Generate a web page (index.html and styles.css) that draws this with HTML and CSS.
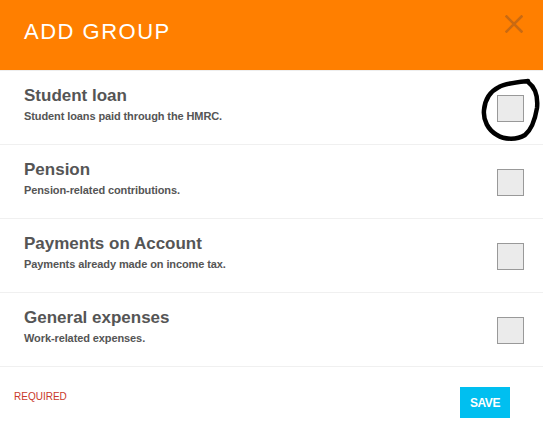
FILE: index.html
```html
<!DOCTYPE html>
<html>
  <head>
    <link rel="stylesheet" href="styles.css">
  </head>
  <body>
    <div class="modal">
      <div class="modal-header">
        <p class="modal-title">ADD GROUP</p>
        <button class="close-btn" aria-label="Close">
          <svg width="18" height="18" viewBox="0 0 18 18">
            <path d="M1.5 1.5 L16.5 16.5 M16.5 1.5 L1.5 16.5" stroke="#c96a12" stroke-width="2.6" stroke-linecap="square" fill="none"/>
          </svg>
        </button>
      </div>
      <div class="group-list">
        <label class="group-row">
          <div class="group-text">
            <p class="group-name">Student loan</p>
            <p class="group-desc">Student loans paid through the HMRC.</p>
          </div>
          <span class="check-wrap">
            <input type="checkbox" class="group-check">
            <svg class="scribble" width="62" height="64" viewBox="0 0 62 64">
              <path d="M48 3 C38 4 26 5 19 9 C11 13 5 21 4 32 C3 42 8 52 17 57 C25 62 37 62 45 57 C51 52 55 42 57 30 C58 20 56 10 48 4" stroke="#000" stroke-width="4.5" stroke-linecap="round" fill="none"/>
            </svg>
          </span>
        </label>
        <label class="group-row">
          <div class="group-text">
            <p class="group-name">Pension</p>
            <p class="group-desc">Pension-related contributions.</p>
          </div>
          <span class="check-wrap">
            <input type="checkbox" class="group-check">
          </span>
        </label>
        <label class="group-row">
          <div class="group-text">
            <p class="group-name">Payments on Account</p>
            <p class="group-desc">Payments already made on income tax.</p>
          </div>
          <span class="check-wrap">
            <input type="checkbox" class="group-check">
          </span>
        </label>
        <label class="group-row">
          <div class="group-text">
            <p class="group-name">General expenses</p>
            <p class="group-desc">Work-related expenses.</p>
          </div>
          <span class="check-wrap">
            <input type="checkbox" class="group-check">
          </span>
        </label>
      </div>
      <div class="modal-footer">
        <p class="required">REQUIRED</p>
        <button class="save-btn">SAVE</button>
      </div>
    </div>
  </body>
</html>
```

FILE: styles.css
```css
* {
  margin: 0;
  padding: 0;
  box-sizing: border-box;
}
body {
  background-color: white;
  font-family: "Liberation Sans", Arial, sans-serif;
}
.modal {
  width: 543px;
  height: 435px;
  overflow: hidden;
}
.modal-header {
  background-color: #ff7f00;
  height: 71px;
  border-bottom: 1px solid #eeeeee;
  display: flex;
  justify-content: space-between;
  align-items: flex-start;
  padding: 15px 20px 0 24px;
}
.modal-title {
  color: white;
  font-size: 22px;
  line-height: 26px;
  letter-spacing: 1.5px;
  margin-top: 4px;
}
.close-btn {
  background: none;
  border: none;
  width: 18px;
  height: 18px;
  cursor: pointer;
}
.close-btn svg {
  display: block;
}
.group-row {
  display: flex;
  justify-content: space-between;
  align-items: flex-start;
  height: 74px;
  padding: 15px 19px 0 24px;
  border-bottom: 1px solid #f0f0f0;
  cursor: pointer;
}
.group-text {
  color: #555555;
}
.group-name {
  font-size: 17px;
  font-weight: bold;
  line-height: 20px;
}
.group-desc {
  font-size: 11px;
  font-weight: bold;
  line-height: 14px;
  letter-spacing: -0.1px;
  margin-top: 3px;
}
.check-wrap {
  position: relative;
  width: 27px;
  height: 27px;
  margin-top: 9px;
}
.group-check {
  appearance: none;
  display: block;
  width: 27px;
  height: 27px;
  background-color: #ebebeb;
  border: 1px solid #999999;
  cursor: pointer;
}
.scribble {
  position: absolute;
  left: -17px;
  top: -17px;
  pointer-events: none;
}
.modal-footer {
  display: flex;
  justify-content: space-between;
  align-items: flex-start;
  padding: 20px 33px 0 14px;
}
.required {
  color: #c9392a;
  font-size: 10px;
  line-height: 12px;
  margin-top: 4px;
}
.save-btn {
  background-color: #00bff0;
  color: white;
  border: none;
  width: 50px;
  height: 31px;
  font-family: "Liberation Sans", Arial, sans-serif;
  font-size: 12px;
  font-weight: bold;
  letter-spacing: -0.5px;
  cursor: pointer;
}
```
